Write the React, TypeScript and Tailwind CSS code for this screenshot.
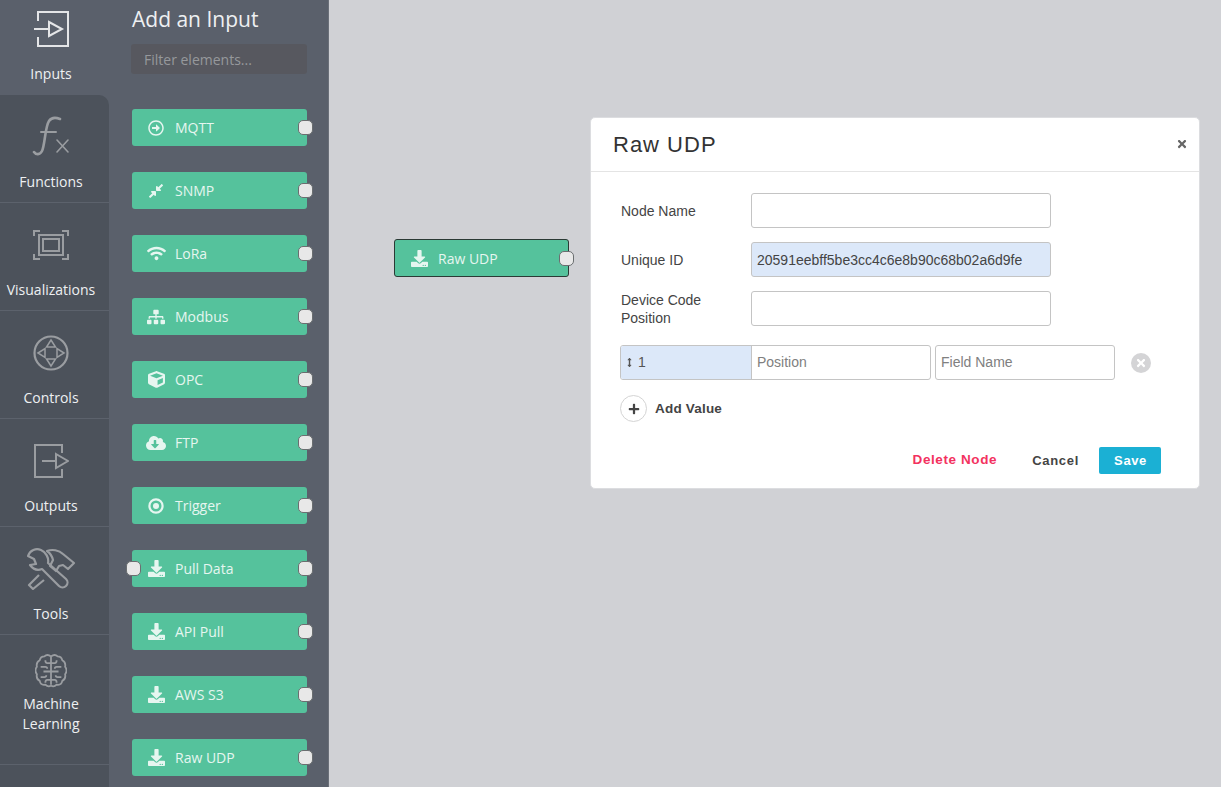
import type { ReactNode } from 'react';
import {
  FaRegArrowAltCircleRight,
  FaCompressAlt,
  FaWifi,
  FaSitemap,
  FaCube,
  FaCloudDownloadAlt,
  FaDownload,
  FaTimes,
  FaPlus,
  FaArrowsAltV
} from 'react-icons/fa';

const InputsIcon = () => (
  <svg width="36" height="36" viewBox="0 0 36 36" fill="none" stroke="#e4e5e7" strokeWidth="2">
    <path d="M5 10V1h30v34H5v-9" />
    <path d="M1 18h14" />
    <path d="M16 11l13 7-13 7z" />
  </svg>
);

const FunctionsIcon = () => (
  <svg width="38" height="42" viewBox="0 0 38 42" fill="none" stroke="#9a9da1" strokeLinecap="round">
    <path d="M2 36c2 3 6 3 8-1 3-6 3-24 7-30 2-3 6-4 11-2" strokeWidth="2.6" />
    <path d="M9 16h15" strokeWidth="2" />
    <path d="M25 24l11 12M36 24L25 36" strokeWidth="1.6" />
  </svg>
);

const VisualizationsIcon = () => (
  <svg width="36" height="32" viewBox="0 0 36 32" fill="none" stroke="#9a9da1" strokeWidth="2">
    <path d="M1 7V2h6M29 2h6v5M35 25v5h-6M7 30H1v-5" />
    <rect x="6" y="6" width="24" height="20" />
    <rect x="10" y="10" width="16" height="12" />
  </svg>
);

const ControlsIcon = () => (
  <svg width="36" height="36" viewBox="0 0 36 36" fill="none" stroke="#9a9da1" strokeWidth="1.5">
    <circle cx="18" cy="18" r="16.5" strokeWidth="2.2" />
    <path d="M18 5l4.5 7h-9zM18 31l4.5-7h-9zM5 18l7-4.5v9zM31 18l-7-4.5v9z" />
  </svg>
);

const OutputsIcon = () => (
  <svg width="36" height="36" viewBox="0 0 36 36" fill="none" stroke="#9a9da1" strokeWidth="2">
    <path d="M29 10V2H2v32h27v-8" />
    <path d="M9 18h13" />
    <path d="M23 11l12 7-12 7z" />
  </svg>
);

const ToolsIcon = () => (
  <svg width="50" height="42" viewBox="0 0 50 42" fill="none" stroke="#9a9da1" strokeWidth="2.2" strokeLinejoin="round">
    <path d="M15 2C10 0 4 2 2 8l6 3 2 5-6 1c3 4 7 6 12 4l17 17c2 2 5 2 7 0s2-5 0-7L22 15c1-5-2-11-7-13z" />
    <path d="M13 27L3 37l4 4 11-9" />
    <path d="M21 3c5-2 12-1 16 3l11 9-6 6-5-4-4 1-3 5-6-5 3-6c-1-4-3-7-6-9z" />
  </svg>
);

const BrainHalf = () => (
  <g>
    <path d="M17 3q-4-3-7 0-4 0-5 4-4 2-3 7-3 4 0 8-1 5 3 7 1 5 6 4 3 3 6 1" />
    <path d="M17 10h-4q-2 0-2-3M6 14h5q2 0 2 2M17 19H9M6 25h4q2 0 2-2M17 28h-4q-2 0-2 3" />
  </g>
);

const BrainIcon = () => (
  <svg width="32" height="37" viewBox="0 0 34 38" fill="none" stroke="#9a9da1" strokeWidth="1.9">
    <path d="M17 3v30" />
    <BrainHalf />
    <g transform="translate(34 0) scale(-1 1)">
      <BrainHalf />
    </g>
  </svg>
);

const TriggerIcon = () => (
  <svg width="16" height="16" viewBox="0 0 16 16" fill="none" stroke="currentColor" strokeWidth="2.2">
    <circle cx="8" cy="8" r="6.6" />
    <circle cx="8" cy="8" r="3" fill="currentColor" stroke="none" />
  </svg>
);

const DarkSection = ({ icon, label, rounded, tall }: { icon: ReactNode; label: ReactNode; rounded?: boolean; tall?: boolean }) => (
  <div
    className={`flex flex-col items-center pr-[7px] bg-[#4c525b] border-b border-[#5c626c] ${tall ? 'h-[130px] pt-[17px]' : 'h-[108px] pt-[20px]'} ${rounded ? 'rounded-tr-[10px]' : ''}`}
  >
    <div className={`flex items-center justify-center ${tall ? 'h-[38px]' : 'h-[44px] mb-[13px]'}`}>{icon}</div>
    <div className={`text-[14px] leading-[20px] text-[#eef0f2] text-center ${tall ? 'mt-[4px]' : ''}`}>{label}</div>
  </div>
);

const nodes = [
  { label: 'MQTT', icon: <FaRegArrowAltCircleRight size={16} /> },
  { label: 'SNMP', icon: <FaCompressAlt size={16} /> },
  { label: 'LoRa', icon: <FaWifi size={19} /> },
  { label: 'Modbus', icon: <FaSitemap size={18} /> },
  { label: 'OPC', icon: <FaCube size={17} /> },
  { label: 'FTP', icon: <FaCloudDownloadAlt size={20} /> },
  { label: 'Trigger', icon: <TriggerIcon /> },
  { label: 'Pull Data', icon: <FaDownload size={17} />, inPort: true },
  { label: 'API Pull', icon: <FaDownload size={17} /> },
  { label: 'AWS S3', icon: <FaDownload size={17} /> },
  { label: 'Raw UDP', icon: <FaDownload size={17} /> }
];

const Port = ({ side }: { side: 'left' | 'right' }) => (
  <span
    className={`absolute top-[11px] size-[15px] rounded-[5px] bg-[#e8e8e8] border border-[#6a6e70] ${side === 'right' ? 'right-[-6px]' : 'left-[-6px]'}`}
  />
);

const Node = ({ label, icon, inPort, outlined }: { label: string; icon: ReactNode; inPort?: boolean; outlined?: boolean }) => (
  <div
    className={`relative flex items-center w-[175px] rounded-[3px] bg-[#55c29c] text-[#e6f6f0] text-[14px] ${outlined ? 'h-[38px] border border-[#2b3a35]' : 'h-[37px]'}`}
  >
    {inPort && <Port side="left" />}
    <span className="flex w-[48px] justify-center shrink-0">{icon}</span>
    <span className="-ml-[5px]">{label}</span>
    <Port side="right" />
  </div>
);

const Field = ({ label, value, blue }: { label: ReactNode; value?: string; blue?: boolean }) => (
  <div className="flex items-center h-[35px]">
    <label className="w-[130px] text-[14px] leading-[18px] text-[#444]">{label}</label>
    <input
      readOnly
      value={value ?? ''}
      className={`w-[300px] h-[35px] px-[5px] rounded-[3px] border border-[#c4c4c4] text-[14px] text-[#444] outline-none ${blue ? 'bg-[#dce8f9]' : 'bg-white'}`}
    />
  </div>
);

export default function App() {
  return (
    <div className="flex h-[787px] w-[1221px] overflow-hidden font-['Open_Sans',sans-serif]">
      <div className="w-[109px] shrink-0 bg-[#5a606b] overflow-hidden">
        <div className="flex flex-col items-center pr-[7px] h-[95px] pt-[11px]">
          <InputsIcon />
          <div className="mt-[17px] text-[14px] leading-[20px] text-[#eef0f2]">Inputs</div>
        </div>
        <DarkSection rounded icon={<FunctionsIcon />} label="Functions" />
        <DarkSection icon={<VisualizationsIcon />} label="Visualizations" />
        <DarkSection icon={<ControlsIcon />} label="Controls" />
        <DarkSection icon={<OutputsIcon />} label="Outputs" />
        <DarkSection icon={<ToolsIcon />} label="Tools" />
        <DarkSection
          tall
          icon={<BrainIcon />}
          label={
            <>
              Machine
              <br />
              Learning
            </>
          }
        />
        <div className="h-[40px] bg-[#4c525b]" />
      </div>

      <div className="w-[220px] shrink-0 bg-[#5a606b] border-r border-[#6b7079] pl-[22px]">
        <h2 className="pt-[5px] pl-[1px] text-[21px] leading-[28px] text-[#eef0f2]">Add an Input</h2>
        <input
          readOnly
          placeholder="Filter elements..."
          className="mt-[11px] block w-[176px] h-[30px] rounded-[3px] bg-[#57585f] px-[13px] text-[14px] text-white outline-none placeholder:text-[#96989c]"
        />
        <div className="mt-[35px] ml-[1px] flex flex-col gap-[26px]">
          {nodes.map((n) => (
            <Node key={n.label} label={n.label} icon={n.icon} inPort={n.inPort} />
          ))}
        </div>
      </div>

      <div className="relative flex-1 bg-[#d0d1d5]">
        <div className="absolute left-[65px] top-[239px]">
          <Node outlined label="Raw UDP" icon={<FaDownload size={17} />} />
        </div>

        <div className="absolute left-[261px] top-[117px] w-[610px] h-[372px] rounded-[5px] border border-[#dcdde0] bg-white font-['Liberation_Sans',sans-serif]">
          <div className="flex items-center justify-between h-[54px] pb-[1px] pl-[22px] pr-[11px] border-b border-[#e4e4e4]">
            <h3 className="text-[22px] tracking-[1px] text-[#333]">Raw UDP</h3>
            <FaTimes size={12} className="text-[#666]" />
          </div>
          <div className="pl-[30px] pt-[21px]">
            <div className="flex flex-col gap-[14px]">
              <Field label="Node Name" />
              <Field label="Unique ID" value="20591eebff5be3cc4c6e8b90c68b02a6d9fe" blue />
              <Field
                label={
                  <>
                    Device Code
                    <br />
                    Position
                  </>
                }
              />
            </div>
            <div className="flex items-center mt-[19px] -ml-[1px]">
              <div className="flex h-[35px] w-[311px] rounded-[3px] border border-[#c4c4c4] overflow-hidden">
                <div className="flex items-center w-[131px] bg-[#dce8f9] pl-[4px] gap-[4px] border-r border-[#c4c4c4] text-[14px] text-[#555]">
                  <FaArrowsAltV size={9} />
                  <span>1</span>
                </div>
                <input
                  readOnly
                  placeholder="Position"
                  className="flex-1 min-w-0 px-[5px] text-[14px] outline-none placeholder:text-[#808080]"
                />
              </div>
              <input
                readOnly
                placeholder="Field Name"
                className="ml-[4px] w-[180px] h-[35px] px-[5px] pb-[2px] rounded-[3px] border border-[#c4c4c4] text-[14px] outline-none placeholder:text-[#808080]"
              />
              <span className="ml-[16px] flex items-center justify-center size-[20px] rounded-full bg-[#d4d4d6] text-white">
                <FaTimes size={12} />
              </span>
            </div>
            <div className="flex items-center mt-[15px] -ml-[1px]">
              <span className="flex items-center justify-center size-[27px] rounded-full border border-[#d4d4d4] text-[#444]">
                <FaPlus size={12} />
              </span>
              <span className="ml-[8px] pt-[1px] text-[13.5px] tracking-[0.2px] font-bold text-[#444]">Add Value</span>
            </div>
          </div>
          <div className="flex items-center justify-end mt-[25px] pr-[38px]">
            <span className="text-[13.5px] font-bold tracking-[0.6px] text-[#f3325f]">Delete Node</span>
            <span className="ml-[35px] text-[13px] font-bold tracking-[0.7px] text-[#444]">Cancel</span>
            <button className="ml-[20px] w-[62px] h-[27px] rounded-[2px] bg-[#1bb0d4] pl-[1px] text-[13px] font-bold tracking-[0.6px] text-white">
              Save
            </button>
          </div>
        </div>
      </div>
    </div>
  );
}
